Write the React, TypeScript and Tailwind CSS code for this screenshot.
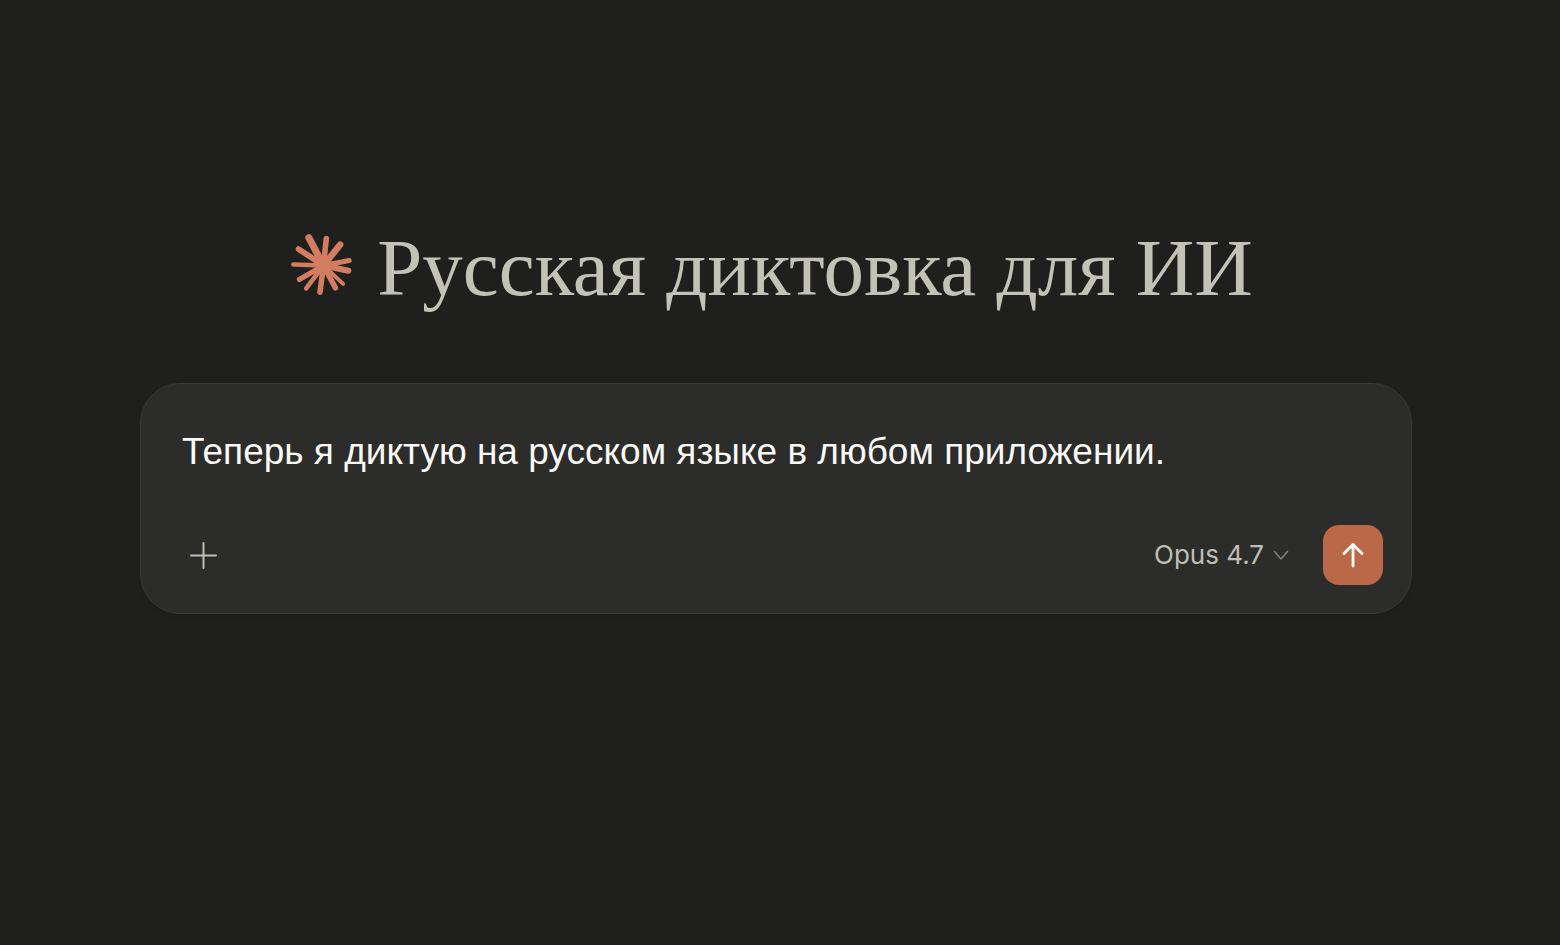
import React, { useCallback, useState } from "react";

interface Ray {
  readonly x: number;
  readonly y: number;
  readonly width: number;
}

// Tip of every ray, clockwise from the upper left one
const rays: Ray[] = [
  { x: 28.8, y: 13.2, width: 7 },
  { x: 46.3, y: 14, width: 5.6 },
  { x: 60.1, y: 20.2, width: 6.6 },
  { x: 69.2, y: 36, width: 5 },
  { x: 68.4, y: 46.2, width: 6 },
  { x: 63.2, y: 59.4, width: 4 },
  { x: 55.4, y: 63.2, width: 5.6 },
  { x: 40, y: 67.6, width: 5.6 },
  { x: 26.2, y: 63.8, width: 4.6 },
  { x: 19.4, y: 55, width: 5.2 },
  { x: 13.4, y: 40, width: 4.6 },
  { x: 18.6, y: 24.6, width: 5.8 },
];

const Starburst = () => (
  <svg
    className="mb-1.5 h-[62px] w-[62px] shrink-0"
    viewBox="11 9.5 62 62"
    stroke="#d27d5f"
    strokeLinecap="round"
    aria-hidden="true"
  >
    {rays.map((ray, i) => (
      <line
        key={i}
        x1={43.5}
        y1={41}
        x2={ray.x}
        y2={ray.y}
        strokeWidth={ray.width}
      />
    ))}
    <circle cx={43.5} cy={41} r={8.5} fill="#d27d5f" stroke="none" />
  </svg>
);

interface ModelSelectProps {
  readonly id: string;
  readonly items: string[];
  readonly selectedItem: string;
  readonly onItemSelected: (value: string) => void;
}

const ModelSelect = ({
  id,
  items,
  selectedItem,
  onItemSelected,
}: ModelSelectProps) => (
  <div className="grid items-center">
    <select
      id={id}
      aria-label="Модель"
      value={selectedItem}
      onChange={(e) => onItemSelected(e.target.value)}
      className="col-start-1 row-start-1 appearance-none bg-transparent pr-[25px] text-[26px] leading-9 text-[#bfbfb4] outline-none"
    >
      {items.map((item) => (
        <option key={item}>{item}</option>
      ))}
    </select>
    <svg
      className="pointer-events-none col-start-1 row-start-1 h-4 w-4 justify-self-end"
      viewBox="0 0 16 16"
      fill="none"
      stroke="#80807a"
      strokeWidth={1.6}
      strokeLinecap="round"
      strokeLinejoin="round"
      aria-hidden="true"
    >
      <path d="M1.500 4.500 8 12l6.500-7.500" />
    </svg>
  </div>
);

const App = () => {
  const [text, setText] = useState(
    "Теперь я диктую на русском языке в любом приложении."
  );
  const [model, setModel] = useState("Opus 4.7");

  const onSubmit = useCallback((e: React.FormEvent) => {
    e.preventDefault();
  }, []);

  return (
    <main className="min-h-screen bg-[#1f1f1d] pt-[220px] pr-[148px] pl-[140px] font-[Inter,sans-serif]">
      <div className="flex items-center justify-center gap-6 pr-2 pb-[67px]">
        <Starburst />
        <h1 className="font-['Liberation_Serif',serif] text-[81px] leading-24 whitespace-nowrap text-[#c3c2b7]">
          Русская диктовка для ИИ
        </h1>
      </div>

      <form
        onSubmit={onSubmit}
        className="rounded-[40px] border border-[#383836] bg-[#2c2c2a] pt-10 pr-7 pb-7 pl-10 shadow-md shadow-black/5"
      >
        <textarea
          aria-label="Сообщение"
          rows={1}
          value={text}
          onChange={(e) => setText(e.target.value)}
          className="block w-full resize-none overflow-hidden bg-transparent pl-px font-['Liberation_Sans',sans-serif] text-[37px] leading-14 text-[#f8f8f5] outline-none"
        />
        <div className="flex items-center justify-between pt-[45px]">
          <button type="button" aria-label="Добавить" className="p-2">
            <svg
              className="h-7 w-7"
              viewBox="0 0 28 28"
              stroke="#bfbfb4"
              strokeWidth={2}
              strokeLinecap="round"
            >
              <path d="M14.500 2v25M2 14.500h25" />
            </svg>
          </button>
          <div className="flex items-center gap-[34px]">
            <ModelSelect
              id="model"
              items={["Opus 4.7"]}
              selectedItem={model}
              onItemSelected={setModel}
            />
            <button
              type="submit"
              aria-label="Отправить"
              className="flex h-15 w-15 items-center justify-center rounded-2xl bg-[#bb6848]"
            >
              <svg
                className="h-7 w-7"
                viewBox="0 0 28 28"
                fill="none"
                stroke="#ffffff"
                strokeWidth={2.8}
                strokeLinecap="round"
                strokeLinejoin="round"
              >
                <path d="M14 25V3.500M5 12.500l9-9 9 9" />
              </svg>
            </button>
          </div>
        </div>
      </form>
    </main>
  );
};

export default App;
